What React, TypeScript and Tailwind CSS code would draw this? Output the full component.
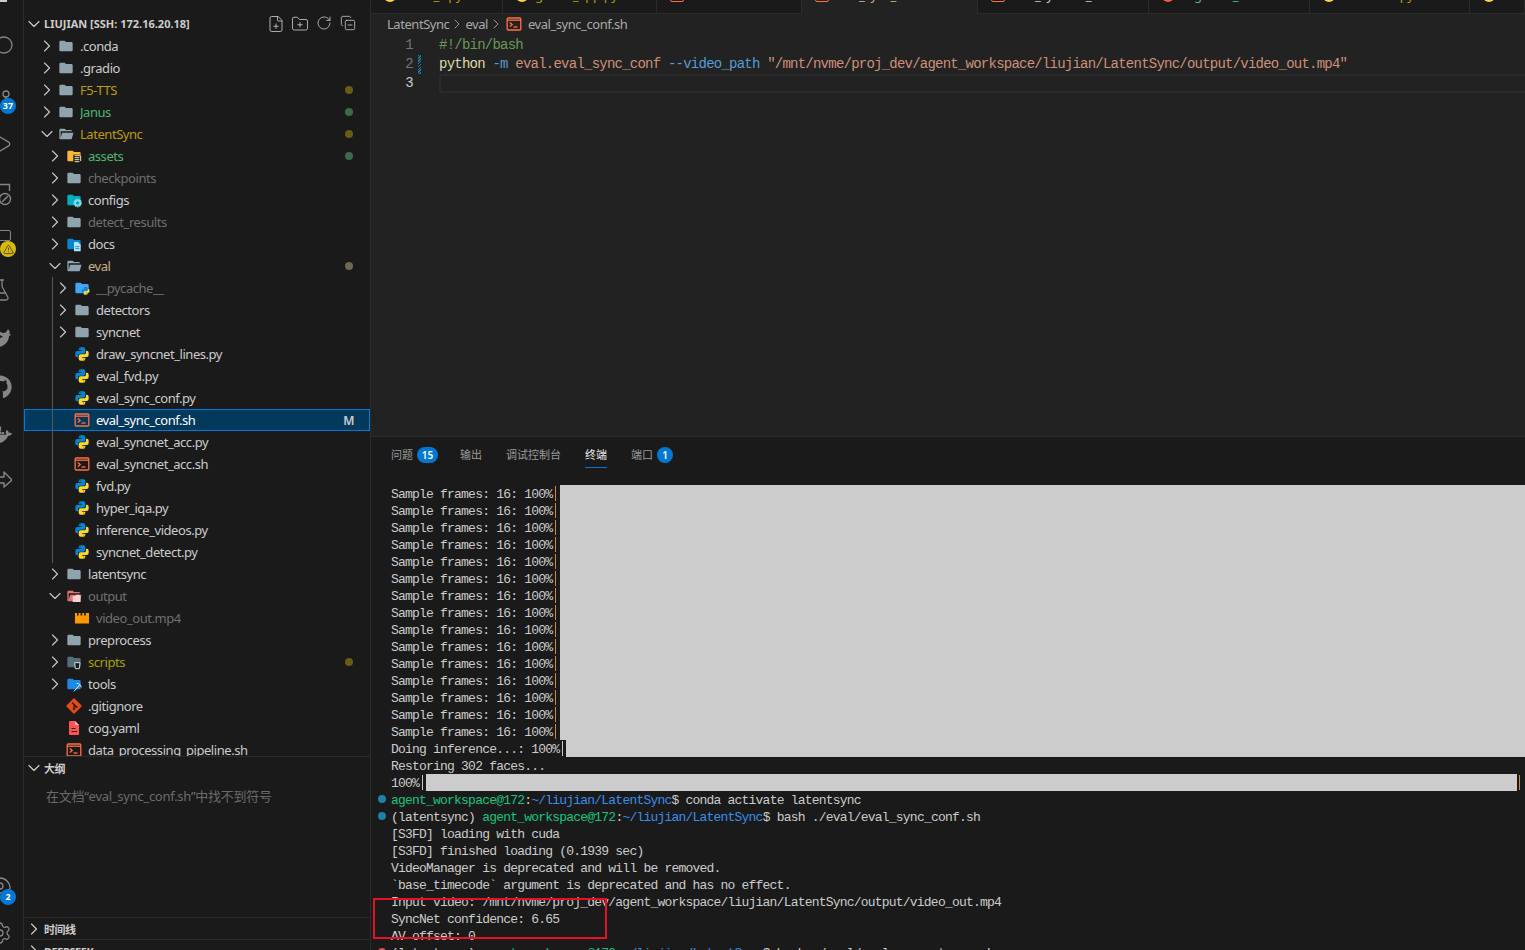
import React from 'react';
import {
  ChevronDown,
  ChevronRight,
  CopyMinus,
  FilePlus,
  FlaskConical,
  FolderPlus,
  GitBranch,
  Play,
  RotateCw,
  Search,
  Settings,
  TriangleAlert,
  UserCircle,
} from 'lucide-react';
import { FaGithub, FaDocker } from 'react-icons/fa';

const closedFolder =
  'M10 4H4c-1.11 0-2 .89-2 2v12c0 1.097.903 2 2 2h16c1.097 0 2-.903 2-2V8a2 2 0 0 0-2-2h-8z';
const openFolder =
  'M19 20H4a2 2 0 0 1-2-2V6c0-1.11.89-2 2-2h6l2 2h7a2 2 0 0 1 2 2H4v10l2.14-8h17.07l-2.28 8.5c-.23.87-1.01 1.5-1.93 1.5z';

const Folder = ({ color = '#90a4ae', open = false, children }: { color?: string; open?: boolean; children?: React.ReactNode }) => (
  <svg viewBox="0 0 24 24" className="h-4 w-4 shrink-0">
    <path fill={color} d={open ? openFolder : closedFolder} />
    {children}
  </svg>
);

const PythonMark = () => (
  <>
    <path
      fill="#0288d1"
      d="M9.86 2A2.86 2.86 0 0 0 7 4.86v1.68h4.29c.39 0 .71.57.71.96H4.86A2.86 2.86 0 0 0 2 10.36v3.781a2.86 2.86 0 0 0 2.86 2.86h1.18v-2.68a2.85 2.85 0 0 1 2.85-2.86h5.25c1.58 0 2.86-1.271 2.86-2.851V4.86A2.86 2.86 0 0 0 14.14 2zm-.72 1.61c.4 0 .72.12.72.71s-.32.891-.72.891c-.39 0-.71-.3-.71-.89s.32-.711.71-.711z"
    />
    <path
      fill="#fdd835"
      d="M17.959 7v2.68a2.85 2.85 0 0 1-2.85 2.859H9.86A2.85 2.85 0 0 0 7 15.389v3.75a2.86 2.86 0 0 0 2.86 2.86h4.28A2.86 2.86 0 0 0 17 19.14v-1.68h-4.291c-.39 0-.709-.57-.709-.96h7.14A2.86 2.86 0 0 0 22 13.64V9.86A2.86 2.86 0 0 0 19.14 7zm-3.1 11.789c.39 0 .71.3.71.89a.71.71 0 0 1-.71.71c-.4 0-.72-.12-.72-.71s.32-.89.72-.89z"
    />
  </>
);

const PyIcon = () => (
  <svg viewBox="0 0 24 24" className="h-4 w-4 shrink-0">
    <PythonMark />
  </svg>
);

const ShIcon = () => (
  <svg viewBox="0 0 16 16" className="h-4 w-4 shrink-0" fill="none" stroke="#ff7043" strokeWidth="1.3">
    <rect x="1.2" y="2" width="13.6" height="12" rx="1" />
    <path d="M1.2 4.2h13.6" />
    <path d="M3.8 6.5 6.2 8.5 3.8 10.5" />
    <path d="M7.5 11h4" />
  </svg>
);

const GitIcon = () => (
  <svg viewBox="0 0 16 16" className="h-4 w-4 shrink-0">
    <path fill="#e64a19" d="M8 1 15 8 8 15 1 8z" strokeLinejoin="round" stroke="#e64a19" strokeWidth="1.5" />
    <path d="M6 4.5 10.5 9M8 7v4" stroke="#1a1a1a" strokeWidth="1.1" fill="none" />
    <circle cx="8" cy="11" r="1.1" fill="#1a1a1a" />
    <circle cx="10.5" cy="9" r="1.1" fill="#1a1a1a" />
  </svg>
);

const YamlIcon = () => (
  <svg viewBox="0 0 16 16" className="h-4 w-4 shrink-0">
    <path fill="#ff5252" d="M4 1h5l4 4v9a1 1 0 0 1-1 1H4a1 1 0 0 1-1-1V2a1 1 0 0 1 1-1z" />
    <path d="M5.5 8.5h4M5.5 11.5h5.5" stroke="#1a1a1a" strokeWidth="1.2" />
    <path d="M9 1v4h4" fill="#ffb0b0" />
  </svg>
);

const VideoIcon = () => (
  <svg viewBox="0 0 16 16" className="h-4 w-4 shrink-0">
    <path
      fill="#ff9800"
      d="M1 3h2v2.5h1.6V3h2v2.5h1.6V3h2v2.5h1.6V3H15v10.5H1z"
    />
  </svg>
);

type Row = {
  name: string;
  depth: number;
  icon: React.ReactNode;
  chevron?: 'right' | 'down';
  color?: string;
  dot?: string;
  selected?: boolean;
};

const yellow = 'text-[#bd9a07]';
const green = 'text-[#4fb86f]';
const dim = 'text-[#6f6f6f]';
const dotYellow = 'bg-[#6b5a12]';
const dotGreen = 'bg-[#3b6b4c]';

const topRows: Row[] = [
  { name: '.conda', depth: 0, chevron: 'right', icon: <Folder /> },
  { name: '.gradio', depth: 0, chevron: 'right', icon: <Folder /> },
  { name: 'F5-TTS', depth: 0, chevron: 'right', icon: <Folder />, color: yellow, dot: dotYellow },
  { name: 'Janus', depth: 0, chevron: 'right', icon: <Folder />, color: green, dot: dotGreen },
  { name: 'LatentSync', depth: 0, chevron: 'down', icon: <Folder open />, color: yellow, dot: dotYellow },
  {
    name: 'assets',
    depth: 1,
    chevron: 'right',
    color: green,
    dot: dotGreen,
    icon: (
      <Folder color="#ffb62e">
        <rect x="11" y="10" width="12" height="13" fill="#1a1a1a" />
        <path d="M13 11.5h9v8M13 14.5h7M13 17.5h7M13 20.5h7" stroke="#fff3d0" strokeWidth="1.4" fill="none" />
      </Folder>
    ),
  },
  { name: 'checkpoints', depth: 1, chevron: 'right', icon: <Folder />, color: dim },
  {
    name: 'configs',
    depth: 1,
    chevron: 'right',
    icon: (
      <Folder color="#00acc1">
        <circle cx="17.5" cy="16.5" r="4" fill="none" stroke="#80deea" strokeWidth="3" />
        <circle cx="17.5" cy="16.5" r="6" fill="none" stroke="#80deea" strokeWidth="1.5" strokeDasharray="2 2" />
      </Folder>
    ),
  },
  { name: 'detect_results', depth: 1, chevron: 'right', icon: <Folder />, color: dim },
  {
    name: 'docs',
    depth: 1,
    chevron: 'right',
    icon: (
      <Folder color="#0288d1">
        <path fill="#b3e5fc" d="M12 9h6l4 4v10H12z" />
        <path d="M14 16h6M14 19h6" stroke="#0277bd" strokeWidth="1.2" />
      </Folder>
    ),
  },
  { name: 'eval', depth: 1, chevron: 'down', icon: <Folder open />, color: 'text-[#c9b084]', dot: 'bg-[#6f6653]' },
];

const evalRows: Row[] = [
  {
    name: '__pycache__',
    depth: 2,
    chevron: 'right',
    color: dim,
    icon: (
      <Folder color="#42a5f5">
        <g transform="translate(10.5 9.5) scale(0.58)">
          <PythonMark />
        </g>
      </Folder>
    ),
  },
  { name: 'detectors', depth: 2, chevron: 'right', icon: <Folder /> },
  { name: 'syncnet', depth: 2, chevron: 'right', icon: <Folder /> },
  { name: 'draw_syncnet_lines.py', depth: 2, icon: <PyIcon /> },
  { name: 'eval_fvd.py', depth: 2, icon: <PyIcon /> },
  { name: 'eval_sync_conf.py', depth: 2, icon: <PyIcon /> },
  { name: 'eval_sync_conf.sh', depth: 2, icon: <ShIcon />, selected: true },
  { name: 'eval_syncnet_acc.py', depth: 2, icon: <PyIcon /> },
  { name: 'eval_syncnet_acc.sh', depth: 2, icon: <ShIcon /> },
  { name: 'fvd.py', depth: 2, icon: <PyIcon /> },
  { name: 'hyper_iqa.py', depth: 2, icon: <PyIcon /> },
  { name: 'inference_videos.py', depth: 2, icon: <PyIcon /> },
  { name: 'syncnet_detect.py', depth: 2, icon: <PyIcon /> },
];

const bottomRows: Row[] = [
  { name: 'latentsync', depth: 1, chevron: 'right', icon: <Folder /> },
  {
    name: 'output',
    depth: 1,
    chevron: 'down',
    color: dim,
    icon: (
      <Folder color="#e57373" open>
        <path fill="#ffcdd2" d="M10 12h4l1-2h5l2 2v9H10z" />
      </Folder>
    ),
  },
  { name: 'video_out.mp4', depth: 2, icon: <VideoIcon />, color: dim },
  { name: 'preprocess', depth: 1, chevron: 'right', icon: <Folder /> },
  {
    name: 'scripts',
    depth: 1,
    chevron: 'right',
    color: 'text-[#a8a000]',
    dot: dotYellow,
    icon: (
      <Folder color="#546e7a">
        <path d="M13 13h8l-1 9h-6z" fill="#1a1a1a" stroke="#cfd8dc" strokeWidth="1.5" />
      </Folder>
    ),
  },
  {
    name: 'tools',
    depth: 1,
    chevron: 'right',
    icon: (
      <Folder color="#1e88e5">
        <path d="M12 23 21 13M16 11c3 0 6 2 7 6" stroke="#e3f2fd" strokeWidth="1.5" fill="none" />
      </Folder>
    ),
  },
  { name: '.gitignore', depth: 1, icon: <GitIcon /> },
  { name: 'cog.yaml', depth: 1, icon: <YamlIcon /> },
  { name: 'data_processing_pipeline.sh', depth: 1, icon: <ShIcon /> },
];

const depthPadding = ['pl-[15px]', 'pl-[23px]', 'pl-[31px]'];

const TreeChevron = ({ down }: { down?: boolean }) =>
  down ? (
    <ChevronDown size={20} strokeWidth={1.4} className="shrink-0" />
  ) : (
    <ChevronRight size={20} strokeWidth={1.4} className="shrink-0" />
  );

const TreeRow = ({ row }: { row: Row }) => (
  <div
    className={`flex h-[22px] items-center pr-[13px] ${depthPadding[row.depth]} ${
      row.selected ? 'bg-[#04395e] outline outline-[#0078d4] -outline-offset-1' : ''
    }`}
  >
    <span className="flex w-4 shrink-0 justify-center text-[#c5c5c5]">
      {row.chevron && <TreeChevron down={row.chevron === 'down'} />}
    </span>
    <span className="ml-[3px] mr-[6px] flex w-4 shrink-0">{row.icon}</span>
    <span className={`flex-1 truncate pt-[2px] ${row.selected ? 'text-white' : row.color ?? 'text-[#cccccc]'}`}>{row.name}</span>
    {row.dot && <span className={`mr-[4px] h-2 w-2 rounded-full ${row.dot}`} />}
    {row.selected && <span className="mr-[3px] pt-[2px] text-[12px] font-semibold text-[#cccccc]">M</span>}
  </div>
);

const SectionHeader = ({ label, open }: { label: string; open?: boolean }) => (
  <div className="flex h-[22px] shrink-0 items-center pl-[2px] text-[11px] font-bold text-[#cccccc]">
    <span className="mr-[2px] flex w-4 justify-center">
      <TreeChevron down={open} />
    </span>
    <span className="pt-[2px]">{label}</span>
  </div>
);

const ActivitySlot = ({ mt, icon, badge }: { mt: string; icon: React.ReactNode; badge?: React.ReactNode }) => (
  <div className={`relative -ml-3 flex h-6 w-6 shrink-0 items-center justify-center text-[#868686] ${mt}`}>
    {icon}
    {badge}
  </div>
);

const Badge = ({ label, top = 'top-[10px]' }: { label: string; top?: string }) => (
  <span
    className={`absolute left-[12px] flex h-4 min-w-4 items-center justify-center rounded-full bg-[#0078d4] px-[2px] text-[9px] font-bold text-white ${top}`}
  >
    {label}
  </span>
);

const FilesGlyph = () => (
  <svg viewBox="0 0 24 24" className="h-6 w-6" fill="none" stroke="#cccccc" strokeWidth="2">
    <path d="M22 -2V9H18V13H0" />
  </svg>
);

const RemoteGlyph = () => (
  <svg viewBox="0 0 24 24" className="h-6 w-6" fill="none" stroke="#868686" strokeWidth="1.4">
    <path d="M10 1.5H21.5V8" />
    <circle cx="17" cy="16" r="5.5" />
    <path d="M14 19l6-6" />
  </svg>
);

const WhaleGlyph = () => (
  <svg viewBox="0 0 24 24" className="h-6 w-6" fill="#868686">
    <path d="M11 5c4 3 7 3 9-2l2 3-1 1 2 2-2 1c0 6-5 10-10 11z" />
    <path d="M12 9l3 2-3 1z" fill="#1a1a1a" />
  </svg>
);

const ShareGlyph = () => (
  <svg viewBox="0 0 24 24" className="h-6 w-6" fill="none" stroke="#868686" strokeWidth="1.4" strokeLinejoin="round">
    <path d="M9 9H16V4L24 12 16 19V15H11V22" />
  </svg>
);

const Sidebar = () => (
  <aside className="flex h-[950px] w-[347px] shrink-0 flex-col border-r border-[#2b2b2b] bg-[#1a1a1a] text-[13px] tracking-[-0.45px]">
    <div className="h-[13px] shrink-0 overflow-hidden pl-[20px]">
      <span className="-mt-[12px] block text-[11px] font-bold tracking-normal text-[#cccccc]">FILES EDIT</span>
    </div>
    <div className="flex h-[22px] shrink-0 items-center pl-[2px] text-[#cccccc]">
      <span className="mr-[2px] flex w-4 justify-center">
        <TreeChevron down />
      </span>
      <span className="flex-1 text-[11px] font-bold tracking-normal">LIUJIAN [SSH: 172.16.20.18]</span>
      <span className="mr-[10px] flex">
        <span className="flex w-6 justify-center"><FilePlus size={18} strokeWidth={1.1} /></span>
        <span className="flex w-6 justify-center"><FolderPlus size={18} strokeWidth={1.1} /></span>
        <span className="flex w-6 justify-center"><RotateCw size={16} strokeWidth={1.2} /></span>
        <span className="flex w-6 justify-center"><CopyMinus size={16} strokeWidth={1.2} /></span>
      </span>
    </div>
    <div className="h-[722px] shrink-0 overflow-hidden border-b border-[#2b2b2b]">
      {topRows.map((row) => (
        <TreeRow key={row.name} row={row} />
      ))}
      <div className="relative">
        {evalRows.map((row) => (
          <TreeRow key={row.name} row={row} />
        ))}
        <span className="absolute bottom-0 left-[28px] top-0 w-px bg-[#585858]" />
      </div>
      {bottomRows.map((row) => (
        <TreeRow key={row.name} row={row} />
      ))}
    </div>
    <div className="h-[161px] shrink-0 border-b border-[#2b2b2b]">
      <SectionHeader label="大纲" open />
      <p className="ml-[22px] mt-[8px] text-[13px] tracking-[-0.27px] text-[#6b6b6b]">在文档“eval_sync_conf.sh”中找不到符号</p>
    </div>
    <div className="h-[22px] shrink-0 border-b border-[#2b2b2b]">
      <SectionHeader label="时间线" />
    </div>
    <SectionHeader label="DEEPSEEK" />
  </aside>
);

const tabs = [
  { name: 'inner_s.py', w: 'w-[132px]', icon: 'py', color: 'text-[#bd9a07]' },
  { name: 'gradio_app.py', w: 'w-[154px]', icon: 'py', color: 'text-[#a8a000]' },
  { name: 'inference.sh', w: 'w-[145px]', icon: 'sh', color: 'text-[#bd9a07]' },
  { name: 'eval_sync_conf.sh', w: 'w-[176px]', icon: 'sh', color: 'text-[#c9b084]', active: true },
  { name: 'eval_syncnet_acc.sh', w: 'w-[171px]', icon: 'sh', color: 'text-[#c5c5c5]' },
  { name: 'segment_infer', w: 'w-[161px]', icon: 'red', color: 'text-[#4fb86f]' },
  { name: 'inference.py', w: 'w-[160px]', icon: 'py', color: 'text-[#bd9a07]' },
  { name: 'demo.py', w: 'flex-1', icon: 'py', color: 'text-[#bd9a07]' },
];

const TabBar = () => (
  <div className="flex h-[14px] shrink-0 overflow-hidden bg-[#1a1a1a] text-[13px] tracking-[-0.3px]">
    {tabs.map((tab) => (
      <div
        key={tab.name}
        className={`flex h-[14px] items-start overflow-hidden border-r border-[#2b2b2b] pl-[13px] ${tab.w} ${
          tab.active ? 'bg-[#222222]' : 'border-b'
        }`}
      >
        <span className="-mt-[13px] flex h-[18px] shrink-0 items-center gap-[7px] whitespace-nowrap">
          {tab.icon === 'py' && <span className="block h-[12px] w-[12px] rounded-full bg-[#fdd835]" />}
          {tab.icon === 'sh' && <span className="block h-[12px] w-[14px] rounded-[2px] border border-[#ff7043]" />}
          {tab.icon === 'red' && <span className="block h-[12px] w-[12px] rounded-full bg-[#ff5252]" />}
          <span className={tab.color}>{tab.name}</span>
        </span>
      </div>
    ))}
  </div>
);

const Editor = () => (
  <section className="flex h-[436px] shrink-0 flex-col bg-[#222222]">
    <TabBar />
    <div className="flex h-[20px] shrink-0 items-center pl-[16px] text-[13px] tracking-[-0.45px] text-[#a9a9a9]">
      <span className="pt-[2px]">LatentSync</span>
      <ChevronRight size={16} strokeWidth={1.3} />
      <span className="pt-[2px]">eval</span>
      <ChevronRight size={16} strokeWidth={1.3} />
      <span className="ml-[2px] mr-[6px] flex"><ShIcon /></span>
      <span className="pt-[2px]">eval_sync_conf.sh</span>
    </div>
    <div className="whitespace-pre pt-[2px] font-['Liberation_Mono',monospace] text-[14px] leading-[19px] tracking-[-0.77px]">
      <div className="flex h-[19px]">
        <span className="w-[42px] text-right text-[#6e7681]">1</span>
        <span className="ml-[26px] text-[#6a9955]">#!/bin/bash</span>
      </div>
      <div className="relative flex h-[19px]">
        <span className="w-[42px] text-right text-[#6e7681]">2</span>
        <span className="ml-[5px] mr-[18px] w-[3px] shrink-0 bg-[repeating-linear-gradient(135deg,#1b81a8_0,#1b81a8_1px,#222222_1px,#222222_2px)]" />
        <span className="text-[#dcdcaa]">python</span>
        <span className="text-[#569cd6]"> -m</span>
        <span className="text-[#ce9178]"> eval.eval_sync_conf</span>
        <span className="text-[#569cd6]"> --video_path</span>
        <span className="text-[#ce9178]"> "/mnt/nvme/proj_dev/agent_workspace/liujian/LatentSync/output/video_out.mp4"</span>
      </div>
      <div className="flex h-[19px]">
        <span className="w-[42px] text-right text-[#cccccc]">3</span>
        <span className="ml-[26px] flex-1 border-y-2 border-l-2 border-[#2a2a2a]" />
      </div>
    </div>
  </section>
);

const CountBadge = ({ label, round }: { label: string; round?: boolean }) => (
  <span
    className={`ml-[4px] flex h-4 items-center justify-center rounded-full bg-[#0078d4] text-[10px] font-semibold text-white ${
      round ? 'w-4' : 'w-[21px]'
    }`}
  >
    {label}
  </span>
);

const PanelTabs = () => (
  <div className="flex h-[36px] shrink-0 items-center pl-[20px] text-[11px] text-[#9a9a9a]">
    <span>问题</span>
    <CountBadge label="15" />
    <span className="ml-[22px]">输出</span>
    <span className="ml-[24px]">调试控制台</span>
    <span className="relative ml-[24px] text-[#e7e7e7]">
      终端
      <span className="absolute -bottom-[5px] left-0 right-0 h-px bg-[#0078d4]" />
    </span>
    <span className="ml-[24px]">端口</span>
    <CountBadge label="1" round />
  </div>
);

const Line = ({ children, dot }: { children: React.ReactNode; dot?: string }) => (
  <div className="relative flex h-[17px] items-center pl-[20px]">
    {dot && <span className={`absolute left-[7px] top-[4px] h-2 w-2 rounded-full ${dot}`} />}
    <span className="pt-[2px]">{children}</span>
  </div>
);

const BarLine = ({
  text,
  edge = 'bg-[#c8912e]',
  gap = 'ml-[4px]',
  tail,
}: {
  text: string;
  edge?: string;
  gap?: string;
  tail?: boolean;
}) => (
  <div className="flex h-[17px] items-center pl-[20px]">
    <span className="pt-[2px]">{text}</span>
    <span className={`ml-[3px] h-[15px] w-px shrink-0 ${edge}`} />
    <span className={`h-[17px] flex-1 bg-[#cccccc] ${gap}`} />
    {tail && <span className="ml-[2px] mr-[3px] h-[15px] w-px shrink-0 bg-[#c8912e]" />}
  </div>
);

const Prompt = () => (
  <>
    <span className="text-[#16c47f]">agent_workspace@172</span>
    <span>:</span>
    <span className="text-[#3b8eea]">~/liujian/LatentSync</span>
    <span>$ </span>
  </>
);

const Terminal = () => (
  <div className="whitespace-pre font-['Liberation_Mono',monospace] text-[13px] tracking-[-0.79px] text-[#cccccc]">
    {Array.from({ length: 15 }, (_, i) => (
      <BarLine key={i} text="Sample frames: 16: 100%" />
    ))}
    <BarLine text="Doing inference...: 100%" edge="bg-[#cccccc]" gap="ml-[3px]" />
    <Line>Restoring 302 faces...</Line>
    <div className="pr-[2px]">
      <BarLine text="100%" edge="bg-[#cccccc]" gap="ml-[3px]" tail />
    </div>
    <Line dot="bg-[#1b81a8]">
      <Prompt />
      conda activate latentsync
    </Line>
    <Line dot="bg-[#1b81a8]">
      (latentsync) <Prompt />
      bash ./eval/eval_sync_conf.sh
    </Line>
    <Line>[S3FD] loading with cuda</Line>
    <Line>[S3FD] finished loading (0.1939 sec)</Line>
    <Line>VideoManager is deprecated and will be removed.</Line>
    <Line>`base_timecode` argument is deprecated and has no effect.</Line>
    <Line>Input video: /mnt/nvme/proj_dev/agent_workspace/liujian/LatentSync/output/video_out.mp4</Line>
    <Line>SyncNet confidence: 6.65</Line>
    <Line>AV offset: 0</Line>
    <Line dot="bg-[#f14c4c]">
      (latentsync) <Prompt />
      bash ./eval/eval_syncnet_acc.sh
    </Line>
  </div>
);

export default function App() {
  return (
    <div className="relative flex h-[950px] w-[1525px] overflow-hidden bg-[#1a1a1a] font-['Noto_Sans','Noto_Sans_CJK_SC',sans-serif]">
      <nav className="flex h-[950px] w-6 shrink-0 flex-col overflow-hidden border-r border-[#2b2b2b] bg-[#1a1a1a]">
        <ActivitySlot mt="-mt-3" icon={<FilesGlyph />} />
        <ActivitySlot
          mt="mt-[22px]"
          icon={<Search size={24} strokeWidth={1.3} className="shrink-0 translate-x-[3px] -scale-x-100" />}
        />
        <ActivitySlot
          mt="mt-[30px]"
          icon={<GitBranch size={24} strokeWidth={1.3} />}
          badge={<Badge label="37" />}
        />
        <ActivitySlot mt="mt-[20px]" icon={<Play size={26} strokeWidth={1.2} className="shrink-0" />} />
        <ActivitySlot mt="mt-[27px]" icon={<RemoteGlyph />} />
        <ActivitySlot
          mt="mt-[16px]"
          icon={<span className="block h-[11px] w-[22px] rounded-[2px] border-[1.5px] border-[#868686]" />}
          badge={
            <span className="absolute left-[12px] top-[18px] flex h-4 w-4 items-center justify-center rounded-full bg-[#d7ba0f] text-[#3a2f00]">
              <TriangleAlert size={11} strokeWidth={1.6} />
            </span>
          }
        />
        <ActivitySlot mt="mt-[31px]" icon={<FlaskConical size={24} strokeWidth={1.3} />} />
        <ActivitySlot mt="mt-[24px]" icon={<WhaleGlyph />} />
        <ActivitySlot mt="mt-[25px]" icon={<FaGithub size={24} />} />
        <ActivitySlot mt="mt-[24px]" icon={<FaDocker size={24} />} />
        <ActivitySlot mt="mt-[21px]" icon={<ShareGlyph />} />
        <ActivitySlot
          mt="mt-[384px]"
          icon={<UserCircle size={24} strokeWidth={1.3} />}
          badge={<Badge label="2" top="top-[13px]" />}
        />
        <ActivitySlot mt="mt-[21px]" icon={<Settings size={24} strokeWidth={1.3} />} />
      </nav>
      <Sidebar />
      <main className="flex h-[950px] min-w-0 flex-1 flex-col overflow-hidden">
        <Editor />
        <div className="flex-1 overflow-hidden border-t border-[#2b2b2b] bg-[#1a1a1a]">
          <PanelTabs />
          <div className="mt-[12px]">
            <Terminal />
          </div>
        </div>
      </main>
      {/* red annotation drawn over the terminal */}
      <div className="absolute left-[373px] top-[898px] h-[41px] w-[234px] border-2 border-[#e81123]" />
    </div>
  );
}
